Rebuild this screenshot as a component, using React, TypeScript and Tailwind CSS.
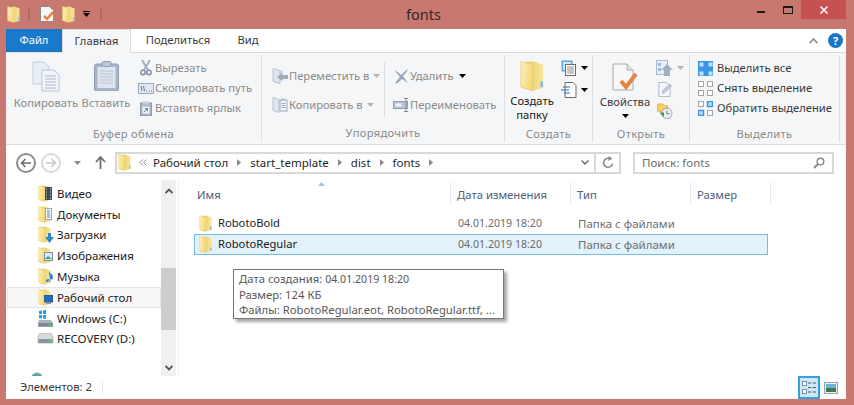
import React from "react";

const FONT = { fontFamily: '"Noto Sans","Open Sans","DejaVu Sans",sans-serif' };

function Folder({ w = 13, h = 17, id = "f" }: { w?: number; h?: number; id?: string }) {
  return (
    <svg width={w} height={h} viewBox="0 0 26 34" className="shrink-0 block">
      <defs>
        <linearGradient id={id} x1="0" y1="0" x2="1" y2="0.3">
          <stop offset="0" stopColor="#fbf1bd" />
          <stop offset="1" stopColor="#f4d977" />
        </linearGradient>
        <linearGradient id={`${id}b`} x1="0" y1="0" x2="1" y2="0">
          <stop offset="0" stopColor="#e8c25c" />
          <stop offset="1" stopColor="#f8e69b" />
        </linearGradient>
      </defs>
      <path d="M2 2 L15 1 L25 5 L25 30 L13 33 L2 30 Z" fill={`url(#${id}b)`} />
      <path d="M1 1 L14 5 L14 33 L1 29 Z" fill={`url(#${id})`} stroke="#e7cb78" strokeWidth="0.8" />
      <path d="M22 23 h3 v6 h-3z" fill="#86b9df" />
    </svg>
  );
}

let navId = 0;
function NavFolder({ overlay }: { overlay?: React.ReactNode }) {
  navId += 1;
  return (
    <span className="relative block w-[14px] h-[17px]">
      <Folder id={`n${navId}`} />
      {overlay}
    </span>
  );
}

function Caret({ color = "#000", className = "" }: { color?: string; className?: string }) {
  return (
    <svg width="7" height="4" viewBox="0 0 7 4" className={`shrink-0 ${className}`}>
      <path d="M0 0h7L3.5 4z" fill={color} />
    </svg>
  );
}

function DocCheck({ s = 1 }: { s?: number }) {
  return (
    <svg width={26 * s} height={28 * s} viewBox="0 0 26 28" className="shrink-0 block">
      <path d="M1 1h14l6 6v20H1z" fill="#f7f7f5" stroke="#a8a8a8" />
      <path d="M15 1v6h6" fill="#e3e3e3" stroke="#a8a8a8" />
      <path d="M9 18l5 6 10-13" fill="none" stroke="#ea8142" strokeWidth="4" />
    </svg>
  );
}

function CopyBig() {
  return (
    <svg width="28" height="31" viewBox="0 0 28 31" className="block">
      <path d="M1 1h11l5 5v17H1z" fill="#e8eef6" stroke="#c2cfdf" />
      <path d="M10 9h12l5 5v16H10z" fill="#f2f5fa" stroke="#b7c6da" />
      <path d="M13 15h11M13 18h11M13 21h11M13 24h11M13 27h11" stroke="#a9b6c8" />
    </svg>
  );
}

function PasteBig() {
  return (
    <svg width="25" height="30" viewBox="0 0 25 30" className="block">
      <rect x="0.5" y="3" width="24" height="27" rx="2" fill="#a9b5c8" stroke="#8f9cb2" />
      <rect x="3.5" y="6" width="18" height="21" fill="#dde4ee" />
      <path d="M6 10h13M6 13h13M6 16h13M6 19h13M6 22h13" stroke="#b9c4d4" />
      <rect x="8" y="0.5" width="9" height="5" rx="1.5" fill="#bdc7d6" stroke="#8f9cb2" />
    </svg>
  );
}

function Scissors() {
  return (
    <svg width="12" height="16" viewBox="0 0 12 16">
      <path d="M2 0l6 10M10 0L4 10" stroke="#a3afc0" strokeWidth="2" fill="none" />
      <circle cx="3" cy="12.5" r="2.2" fill="none" stroke="#7f8da3" strokeWidth="1.5" />
      <circle cx="9" cy="12.5" r="2.2" fill="none" stroke="#7f8da3" strokeWidth="1.5" />
    </svg>
  );
}

function PathIcon() {
  return (
    <svg width="16" height="11" viewBox="0 0 16 11">
      <rect x="0.5" y="0.5" width="15" height="10" fill="#e2e8f1" stroke="#9aa9bf" />
      <path d="M3 3l1 5M5.5 3l1 5M8 8h1M11 8h1M13 8h1" stroke="#66758c" />
    </svg>
  );
}

function ShortcutIcon() {
  return (
    <svg width="12" height="15" viewBox="0 0 12 15">
      <rect x="0.5" y="2" width="11" height="12.5" fill="#aab6c7" stroke="#8d9ab0" />
      <rect x="3" y="0.5" width="6" height="3" fill="#c4cdd9" />
      <rect x="2.5" y="5.5" width="7" height="7" fill="#eef1f6" />
      <path d="M4 11l3-3M5 7.5h2.5V10" stroke="#5d7ea8" fill="none" />
    </svg>
  );
}

function MoveIcon() {
  return (
    <svg width="16" height="16" viewBox="0 0 16 16">
      <path d="M1 0.5l7 2v13l-7-2z" fill="#dfe6f0" stroke="#b7c4d6" />
      <path d="M8 2.5h3v10H8z" fill="#c9d3e1" />
      <path d="M16 7H10V5l-5 4 5 4v-2h6z" fill="#9cabbf" />
    </svg>
  );
}

function CopyToIcon() {
  return (
    <svg width="16" height="16" viewBox="0 0 16 16">
      <path d="M1 0.5l6 2v13l-6-2z" fill="#dfe6f0" stroke="#b7c4d6" />
      <rect x="8" y="3" width="7" height="11" fill="#f3f5f9" stroke="#9cabbf" />
      <rect x="9" y="1.5" width="4" height="2.5" fill="#b7c4d6" />
      <path d="M9.5 6.5h4M9.5 8.5h4M9.5 10.5h4" stroke="#9cabbf" />
    </svg>
  );
}

function DeleteIcon() {
  return (
    <svg width="16" height="15" viewBox="0 0 16 15">
      <path d="M1 1c4 2 6 4 7 5 2-2 4-4 7-6-1 3-3 5-5 7l5 7-6-4c-2 2-4 4-7 5 1-3 3-5 5-7z" fill="#9aa9bd" />
    </svg>
  );
}

function RenameIcon() {
  return (
    <svg width="16" height="14" viewBox="0 0 16 14">
      <rect x="0.5" y="3.5" width="14" height="7" fill="#b9c5d5" stroke="#8e9db2" />
      <rect x="2.5" y="5.5" width="6" height="3" fill="#eef1f6" />
      <path d="M11 0.5h4M13 0.5v13M11 13.5h4" stroke="#7f8da3" fill="none" />
    </svg>
  );
}

function SelectAll({ mode }: { mode: "all" | "none" | "invert" }) {
  const cells = mode === "all" ? [1, 1, 1, 1] : mode === "none" ? [0, 0, 0, 0] : [0, 1, 1, 0];
  const pos = [
    [0, 0],
    [9, 0],
    [0, 9],
    [9, 9],
  ];
  return (
    <svg width="15" height="15" viewBox="0 0 15 15">
      {mode === "all" && <rect width="15" height="15" fill="#3b97e3" />}
      {cells.map((c, i) =>
        mode === "all" ? (
          <rect key={i} x={pos[i][0] + 1.5} y={pos[i][1] + 1.5} width="4" height="4" fill="#bfe0fa" />
        ) : c ? (
          <rect key={i} x={pos[i][0] + 0.5} y={pos[i][1] + 0.5} width="5" height="5" fill="#bfe0fa" stroke="#3b97e3" strokeWidth="1.5" />
        ) : (
          <rect key={i} x={pos[i][0] + 0.5} y={pos[i][1] + 0.5} width="5" height="5" fill="#fff" stroke="#a5a5a5" />
        )
      )}
    </svg>
  );
}

const SmallAction = ({ icon, text, dim }: { icon: React.ReactNode; text: string; dim?: boolean }) => (
  <div className="h-[22px] flex items-center">
    <span className="w-[19px] flex justify-center shrink-0">{icon}</span>
    <span className={`text-[11.2px] whitespace-nowrap ${dim ? "text-[#8b8b8b]" : "text-[#3a3a3a]"}`}>{text}</span>
  </div>
);

function Group({ width, label, children }: { width: string; label: string; children: React.ReactNode }) {
  return (
    <div className={`${width} shrink-0 flex flex-col border-r border-[#dfe0e2] my-[2px]`}>
      <div className="h-[64px] flex pt-[3px]">{children}</div>
      <div className="h-[22px] mt-[7px] flex items-center justify-center text-[11.2px] tracking-[0.3px] text-[#8a8a8a]">
        {label}
      </div>
    </div>
  );
}

const navItems: { label: string; icon: () => React.ReactNode }[] = [
  {
    label: "Видео",
    icon: () => (
      <NavFolder
        overlay={
          <svg width="7" height="13" viewBox="0 0 7 13" className="absolute right-0 top-[2px]">
            <rect width="7" height="13" fill="#3d4a5c" />
            <path d="M1 2h1M1 5h1M1 8h1M1 11h1M5 2h1M5 5h1M5 8h1M5 11h1" stroke="#dfe6f0" />
          </svg>
        }
      />
    ),
  },
  {
    label: "Документы",
    icon: () => (
      <NavFolder
        overlay={
          <svg width="7" height="12" viewBox="0 0 7 12" className="absolute right-0 top-[2px]">
            <rect x="0.5" y="0.5" width="6" height="11" fill="#f4f6fa" stroke="#9aa9bf" />
            <path d="M2 3h3M2 5h3M2 7h3M2 9h3" stroke="#5b8ec9" />
          </svg>
        }
      />
    ),
  },
  {
    label: "Загрузки",
    icon: () => (
      <NavFolder
        overlay={
          <svg width="9" height="10" viewBox="0 0 9 10" className="absolute -right-[2px] top-[7px]">
            <path d="M3 0h3v4h3L4.500 10 0 4h3z" fill="#2e87d6" />
          </svg>
        }
      />
    ),
  },
  {
    label: "Изображения",
    icon: () => (
      <NavFolder
        overlay={
          <svg width="9" height="9" viewBox="0 0 9 9" className="absolute -right-[1px] top-[5px]">
            <rect x="0.5" y="0.5" width="8" height="8" fill="#d9ecf7" stroke="#7f8da3" />
            <path d="M1 7l3-3 4 3z" fill="#4d9a63" />
          </svg>
        }
      />
    ),
  },
  {
    label: "Музыка",
    icon: () => (
      <NavFolder
        overlay={
          <svg width="7" height="12" viewBox="0 0 7 12" className="absolute -right-[1px] top-[3px]">
            <path d="M3 0c1 3 4 3 4 6s-2 3-3 2V2L3 9c0 2-3 3-3 1s2-2 3-2z" fill="#2e87d6" />
          </svg>
        }
      />
    ),
  },
  {
    label: "Рабочий стол",
    icon: () => (
      <NavFolder
        overlay={
          <svg width="9" height="9" viewBox="0 0 9 9" className="absolute -right-[1px] top-[6px]">
            <rect width="9" height="7" fill="#1e6fc0" stroke="#34475f" strokeWidth="0.8" />
            <rect x="2" y="7" width="5" height="2" fill="#8a97a8" />
          </svg>
        }
      />
    ),
  },
  {
    label: "Windows (C:)",
    icon: () => (
      <svg width="17" height="17" viewBox="0 0 17 17" className="block -ml-[1px]">
        <path d="M2 1l3-.5V4H2zM6 .4L9 0v4H6zM2 5h3v3.500L2 8zM6 5h3v4L6 8.500z" fill="#1ba1e2" />
        <path d="M2 10h12l2 3v4H1v-4z" fill="#aab4c0" />
        <rect x="1.500" y="13" width="14" height="3.500" fill="#7d8794" />
        <rect x="11" y="14" width="3" height="1.500" fill="#5bd160" />
      </svg>
    ),
  },
  {
    label: "RECOVERY (D:)",
    icon: () => (
      <svg width="17" height="11" viewBox="0 0 17 11" className="block -ml-[1px]">
        <path d="M3 0h11l2 4v6H1V4z" fill="#d7dbe0" stroke="#98a1ad" strokeWidth="0.6" />
        <rect x="1.500" y="6" width="14" height="4" fill="#8a929d" />
        <rect x="11" y="7" width="3" height="1.500" fill="#5bd160" />
      </svg>
    ),
  },
];

function FileRow({ name, selected, id }: { name: string; selected?: boolean; id: string }) {
  return (
    <div
      className={`flex items-center h-[21px] w-[574px] border pl-[4px] text-[11.2px] ${
        selected ? "bg-[#e3f1fa] border-[#72bce6]" : "border-transparent"
      }`}
    >
      <div className="w-[259px] flex items-center shrink-0">
        <Folder id={id} w={13} h={17} />
        <span className="ml-[6px] text-[#1a1a1a]">{name}</span>
      </div>
      <span className="w-[120px] shrink-0 text-[#6d6d6d] text-[10.6px]">04.01.2019 18:20</span>
      <span className="text-[#6d6d6d] text-[11.5px]">Папка с файлами</span>
    </div>
  );
}

function HeaderCell({ width, label, pl }: { width: string; label: string; pl: string }) {
  return (
    <div className={`${width} shrink-0 h-[21px] border-r border-[#e4eaf1]`}>
      <div className={`${pl} pt-[4px] text-[11.3px] leading-[17px] text-[#4c607a]`}>{label}</div>
    </div>
  );
}

function Chevron() {
  return (
    <svg width="4" height="7" viewBox="0 0 4 7" className="mx-[9px] shrink-0">
      <path d="M0 0l4 3.500L0 7z" fill="#8a8a8a" />
    </svg>
  );
}

export default function App() {
  return (
    <div className="w-[854px] h-[405px] overflow-hidden bg-[#c97870] flex flex-col pl-[6px] pr-[8px] pb-[6px] relative" style={FONT}>
      {/* title bar */}
      <div className="h-[29px] shrink-0 flex items-start relative">
        <div className="flex items-center h-[28px] pl-[1px]">
          <Folder id="q1" w={13} h={17} />
          <div className="w-[2px] h-[12px] bg-[#ad6a64] ml-[8px]" />
          <span className="ml-[10px]">
            <svg width="15" height="16" viewBox="0 0 15 16" className="block">
              <path d="M.5.5h9l4 4v11H.5z" fill="#f7f7f5" stroke="#8c8c8c" />
              <path d="M4 10l3 3 6-7" fill="none" stroke="#ea8142" strokeWidth="2.500" />
            </svg>
          </span>
          <span className="ml-[7px]">
            <Folder id="q2" w={13} h={17} />
          </span>
          <span className="ml-[8px] flex flex-col items-center gap-[1px]">
            <span className="w-[7px] h-[1px] bg-black" />
            <Caret />
          </span>
          <div className="w-[2px] h-[12px] bg-[#ad6a64] ml-[10px]" />
        </div>
        <div className="absolute left-[400px] top-[3px] text-[14.5px] leading-[22px] text-[#2e2a2a]">fonts</div>
        <div className="ml-auto flex items-start">
          <div className="w-[28px] h-[19px] flex items-center justify-center">
            <span className="w-[8px] h-[2px] bg-[#1a1a1a] mt-[5px]" />
          </div>
          <div className="w-[26px] h-[19px] flex items-center justify-center">
            <span className="w-[10px] h-[8px] border border-[#1a1a1a] border-t-2" />
          </div>
          <div className="w-[45px] h-[19px] bg-[#c75050] flex items-center justify-center">
            <svg width="8" height="8" viewBox="0 0 8 8">
              <path d="M.5.5l7 7M7.500.5l-7 7" stroke="#fff" strokeWidth="1.500" />
            </svg>
          </div>
        </div>
      </div>

      <div className="flex-1 min-h-0 bg-white flex flex-col">
        {/* tabs */}
        <div className="h-[23px] shrink-0 flex text-[11.2px] text-[#3a3a3a] relative">
          <div className="w-[56px] bg-[#1979ca] text-white flex items-center justify-center">Файл</div>
          <div className="w-[69px] h-[24px] bg-[#f5f6f7] border border-b-0 border-[#dadbdc] z-10 flex items-center justify-center">Главная</div>
          <div className="w-[94px] flex items-center justify-center">Поделиться</div>
          <div className="w-[46px] flex items-center justify-center">Вид</div>
          <div className="ml-auto flex items-center pr-[3px] gap-[10px]">
            <svg width="9" height="6" viewBox="0 0 9 6">
              <path d="M.5 5L4.500 1l4 4" fill="none" stroke="#9a9a9a" strokeWidth="1.800" />
            </svg>
            <span className="w-[15px] h-[15px] rounded-full bg-[#1c76c8] text-white text-[11px] font-bold flex items-center justify-center leading-none">?</span>
          </div>
        </div>

        {/* ribbon */}
        <div className="h-[93px] shrink-0 bg-[#f5f6f7] border-t border-b border-[#dadbdc] flex">
          <Group width="w-[256px]" label="Буфер обмена">
            <div className="w-[64px] ml-[8px] flex flex-col items-center pt-[3px] text-[11.2px] text-[#8b8b8b]">
              <div className="h-[32px]"><CopyBig /></div>
              <span className="mt-[2px]">Копировать</span>
            </div>
            <div className="w-[56px] flex flex-col items-center pt-[3px] text-[11.2px] text-[#8b8b8b]">
              <div className="h-[32px]"><PasteBig /></div>
              <span className="mt-[2px]">Вставить</span>
            </div>
            <div className="ml-[2px] flex flex-col">
              <SmallAction dim icon={<Scissors />} text="Вырезать" />
              <SmallAction dim icon={<PathIcon />} text="Скопировать путь" />
              <SmallAction dim icon={<ShortcutIcon />} text="Вставить ярлык" />
            </div>
          </Group>
          <Group width="w-[243px]" label="Упорядочить">
            <div className="ml-[8px] flex flex-col pt-[7px] gap-[7px] w-[114px]">
              <div className="flex items-center">
                <SmallAction dim icon={<MoveIcon />} text="Переместить в" />
                <Caret color="#b5b5b5" className="ml-[4px]" />
              </div>
              <div className="flex items-center">
                <SmallAction dim icon={<CopyToIcon />} text="Копировать в" />
                <Caret color="#b5b5b5" className="ml-[4px]" />
              </div>
            </div>
            <div className="w-px h-[55px] bg-[#dfe0e2] mt-[4px]" />
            <div className="ml-[6px] flex flex-col pt-[7px] gap-[7px]">
              <div className="flex items-center">
                <SmallAction dim icon={<DeleteIcon />} text="Удалить" />
                <Caret className="ml-[5px]" />
              </div>
              <SmallAction dim icon={<RenameIcon />} text="Переименовать" />
            </div>
          </Group>
          <Group width="w-[88px]" label="Создать">
            <div className="w-[50px] ml-[2px] flex flex-col items-center pt-[2px] text-[11.2px] leading-[14px] text-[#1a1a1a]">
              <div className="h-[33px]"><Folder id="big" w={24} h={32} /></div>
              <span className="mt-[2px]">Создать</span>
              <span>папку</span>
            </div>
            <div className="ml-[4px] flex flex-col pt-[2px] gap-[6px]">
              <div className="flex items-center gap-[4px]">
                <svg width="16" height="16" viewBox="0 0 16 16">
                  <rect x="0.500" y="0.500" width="11" height="11" fill="#5fa8e6" />
                  <rect x="2" y="2" width="8" height="8" fill="#d4e8fa" />
                  <rect x="4.500" y="4.500" width="10" height="11" fill="#fff" stroke="#6b6b6b" />
                  <path d="M6 7h7M6 9h7M6 11h7M6 13h7" stroke="#8c8c8c" />
                </svg>
                <Caret />
              </div>
              <div className="flex items-center gap-[4px]">
                <svg width="16" height="16" viewBox="0 0 16 16">
                  <path d="M4 .5h8l3 3v12H4z" fill="#fff" stroke="#6b6b6b" />
                  <path d="M2 5h7M0 8h8M3 11h6" stroke="#1f6fc2" />
                </svg>
                <Caret />
              </div>
            </div>
          </Group>
          <Group width="w-[97px]" label="Открыть">
            <div className="w-[62px] ml-[1px] flex flex-col items-center pt-[5px] text-[11.2px] text-[#3a3a3a]">
              <div className="h-[29px]"><DocCheck /></div>
              <span className="mt-[2px] leading-[16px]">Свойства</span>
              <Caret className="mt-[4px]" />
            </div>
            <div className="flex flex-col pt-[2px] gap-[6px]">
              <div className="flex items-center gap-[4px]">
                <svg width="17" height="16" viewBox="0 0 17 16">
                  <rect x="0.500" y="0.500" width="11" height="14" fill="#e9eef5" stroke="#a9b6c8" />
                  <path d="M2 3h3v3H2zM2 8h3v3H2z" fill="#9db7d6" />
                  <path d="M11 4l6 6h-3v6H8v-6H5z" fill="#9fb0c6" />
                </svg>
                <Caret color="#b5b5b5" />
              </div>
              <svg width="17" height="16" viewBox="0 0 17 16">
                <path d="M2.500.5h8l4 4v11h-12z" fill="#f4f6fa" stroke="#a9b6c8" />
                <path d="M6 12l1-3 7-7 2 2-7 7z" fill="#c7d2e0" stroke="#8e9db2" strokeWidth="0.700" />
              </svg>
              <svg width="17" height="17" viewBox="0 0 17 17">
                <path d="M1 1h6l2 2h3v6H1z" fill="#f2cf62" stroke="#d2a63d" strokeWidth="0.700" />
                <circle cx="11" cy="11" r="5.500" fill="#eef1f5" stroke="#9aa3ae" />
                <path d="M11 8v3.500h3" fill="none" stroke="#6b7480" />
                <path d="M8 7v3H3l3 3 2 2v-3" fill="#3aa13a" />
              </svg>
            </div>
          </Group>
          <Group width="w-[150px]" label="Выделить">
            <div className="ml-[8px] flex flex-col">
              <div className="h-[22px] flex items-center gap-[4px]">
                <SelectAll mode="all" />
                <span className="text-[11.2px] text-[#3a3a3a] whitespace-nowrap">Выделить все</span>
              </div>
              <div className="h-[22px] flex items-center gap-[4px]">
                <SelectAll mode="none" />
                <span className="text-[11.2px] text-[#3a3a3a] whitespace-nowrap">Снять выделение</span>
              </div>
              <div className="h-[22px] flex items-center gap-[4px]">
                <SelectAll mode="invert" />
                <span className="text-[11.2px] text-[#3a3a3a] whitespace-nowrap">Обратить выделение</span>
              </div>
            </div>
          </Group>
        </div>

        {/* address row */}
        <div className="h-[35px] shrink-0 flex items-center">
          <div className="ml-[10px] w-[20px] h-[20px] rounded-full border-2 border-[#8d8d8d] flex items-center justify-center">
            <svg width="12" height="10" viewBox="0 0 12 10">
              <path d="M11 5H2M5.500 1L1.500 5l4 4" fill="none" stroke="#6b6b6b" strokeWidth="1.500" />
            </svg>
          </div>
          <div className="ml-[5px] w-[20px] h-[20px] rounded-full border-2 border-[#d9d9d9] flex items-center justify-center">
            <svg width="12" height="10" viewBox="0 0 12 10">
              <path d="M1 5h9M6.500 1l4 4-4 4" fill="none" stroke="#c8c8c8" strokeWidth="1.500" />
            </svg>
          </div>
          <Caret color="#8a8a8a" className="ml-[13px]" />
          <svg width="11" height="13" viewBox="0 0 11 13" className="ml-[14px]">
            <path d="M5.500 13V2M1 6l4.500-5L10 6" fill="none" stroke="#6d6d6d" strokeWidth="1.800" />
          </svg>
          <div className="ml-[9px] w-[506px] h-[22px] border-2 border-[#d9d9d9] flex items-center text-[11.5px] text-[#1f1f1f]">
            <span className="ml-[1px]"><Folder id="ad" w={13} h={17} /></span>
            <svg width="8" height="7" viewBox="0 0 8 7" className="ml-[8px] shrink-0">
              <path d="M4 .5L1 3.500l3 3M7.500.5l-3 3 3 3" fill="none" stroke="#8a8a8a" />
            </svg>
            <span className="ml-[6px]">Рабочий стол</span>
            <Chevron />
            <span>start_template</span>
            <Chevron />
            <span>dist</span>
            <Chevron />
            <span>fonts</span>
            <Chevron />
            <div className="ml-auto flex items-center h-full">
              <svg width="8" height="5" viewBox="0 0 8 5" className="mr-[5px]">
                <path d="M.5.5L4 4 7.500.5" fill="none" stroke="#6d6d6d" strokeWidth="1.500" />
              </svg>
              <div className="w-[25px] h-full border-l-2 border-[#d9d9d9] flex items-center justify-center">
                <svg width="12" height="13" viewBox="0 0 12 13">
                  <path d="M10.500 7.500a4.500 4.500 0 1 1-2-4.500" fill="none" stroke="#8a8a8a" strokeWidth="1.600" />
                  <path d="M6.500 0v5l4-2.500z" fill="#8a8a8a" />
                </svg>
              </div>
            </div>
          </div>
          <div className="ml-[12px] w-[201px] h-[22px] border-2 border-[#d9d9d9] flex items-center justify-between pl-[7px] pr-[7px] text-[11.5px] text-[#6d6d6d]">
            <span>Поиск: fonts</span>
            <svg width="12" height="12" viewBox="0 0 12 12">
              <circle cx="7.500" cy="4.500" r="3.300" fill="none" stroke="#8a8a8a" strokeWidth="1.500" />
              <path d="M5 7l-4 4" stroke="#8a8a8a" strokeWidth="2.200" />
            </svg>
          </div>
        </div>

        {/* body */}
        <div className="flex-1 min-h-0 flex">
          <div className="w-[155px] shrink-0 pt-[3px] overflow-hidden">
            {navItems.map((it) => (
              <div
                key={it.label}
                className={`h-[20.8px] flex items-center pl-[30px] ml-[1px] border text-[11.5px] text-[#1a1a1a] ${
                  it.label === "Рабочий стол" ? "bg-[#f7f7f7] border-[#e5e5e5]" : "border-transparent"
                }`}
              >
                <span className="w-[19px] shrink-0">{it.icon()}</span>
                <span className="whitespace-nowrap">{it.label}</span>
              </div>
            ))}
            <svg width="12" height="12" viewBox="0 0 12 12" className="block ml-[25px] mt-[23px]">
              <circle cx="6" cy="6" r="5.500" fill="#4a9bd8" />
              <path d="M2 3c2-2 6-2 8 0" fill="none" stroke="#7cc46a" strokeWidth="1.500" />
            </svg>
          </div>
          <div className="w-[15px] shrink-0 bg-[#f0f0f0] flex flex-col items-center relative">
            <svg width="8" height="6" viewBox="0 0 8 6" className="mt-[8px]">
              <path d="M.5 5L4 1.500 7.500 5" fill="none" stroke="#555" strokeWidth="1.800" />
            </svg>
            <div className="w-full h-[62px] bg-[#cdcdcd] mt-[74px]" />
            <svg width="8" height="6" viewBox="0 0 8 6" className="mt-auto mb-[5px]">
              <path d="M.5 1L4 4.500 7.500 1" fill="none" stroke="#555" strokeWidth="1.800" />
            </svg>
          </div>
          <div className="flex-1 ml-[2px] border-l border-[#f0f0f0] relative">
            <div className="flex pt-[2px]">
              <HeaderCell width="w-[272px]" pl="pl-[18px]" label="Имя" />
              <HeaderCell width="w-[120px]" pl="pl-[6px]" label="Дата изменения" />
              <HeaderCell width="w-[120px]" pl="pl-[6px]" label="Тип" />
              <HeaderCell width="w-[80px]" pl="pl-[6px]" label="Размер" />
            </div>
            <svg width="7" height="4" viewBox="0 0 7 4" className="absolute left-[139px] top-[2px]">
              <path d="M0 4h7L3.500 0z" fill="#a5c3dc" />
            </svg>
            <div className="ml-[15px] mt-[10px]">
              <FileRow id="r1" name="RobotoBold" />
              <FileRow id="r2" name="RobotoRegular" selected />
            </div>
            <div className="absolute left-[54px] top-[89px] w-[271px] h-[50px] bg-white border border-[#767676] shadow-[3px_3px_3px_rgba(0,0,0,0.35)] pl-[5px] pt-[1px] text-[11.3px] leading-[15px] text-[#575757] whitespace-nowrap">
              <div>
                Дата создания: <span className="text-[10.6px]">04.01.2019 18:20</span>
              </div>
              <div>Размер: 124 КБ</div>
              <div>Файлы: RobotoRegular.eot, RobotoRegular.ttf, ...</div>
            </div>
          </div>
        </div>

        {/* status */}
        <div className="h-[23px] shrink-0 flex items-center text-[11.2px] text-[#3a3a3a] pl-[14px]">
          <span>Элементов: 2</span>
          <div className="w-px h-[12px] bg-[#e8e8e8] ml-[10px]" />
          <div className="ml-auto mr-[8px] flex items-center gap-[4px]">
            <div className="w-[22px] h-[23px] border-2 border-[#37a0dc] bg-[#cbe8f6] flex items-center justify-center">
              <svg width="15" height="13" viewBox="0 0 15 13">
                <rect x="0.500" y="0.500" width="4" height="4" fill="#fff" stroke="#7f8da3" />
                <rect x="0.500" y="8.500" width="4" height="4" fill="#fff" stroke="#7f8da3" />
                <path d="M6 2h3M10.500 2H14M6 6.500h3M10.500 6.500H14M6 11h3M10.500 11H14" stroke="#4c5a6c" />
              </svg>
            </div>
            <svg width="14" height="12" viewBox="0 0 14 12">
              <rect x="0.500" y="0.500" width="13" height="11" fill="#e8f0f6" stroke="#98a4b2" />
              <rect x="2" y="2" width="10" height="4" fill="#6fb2d8" />
              <rect x="2" y="6" width="10" height="4" fill="#3f7a4a" />
            </svg>
          </div>
        </div>
      </div>
    </div>
  );
}
